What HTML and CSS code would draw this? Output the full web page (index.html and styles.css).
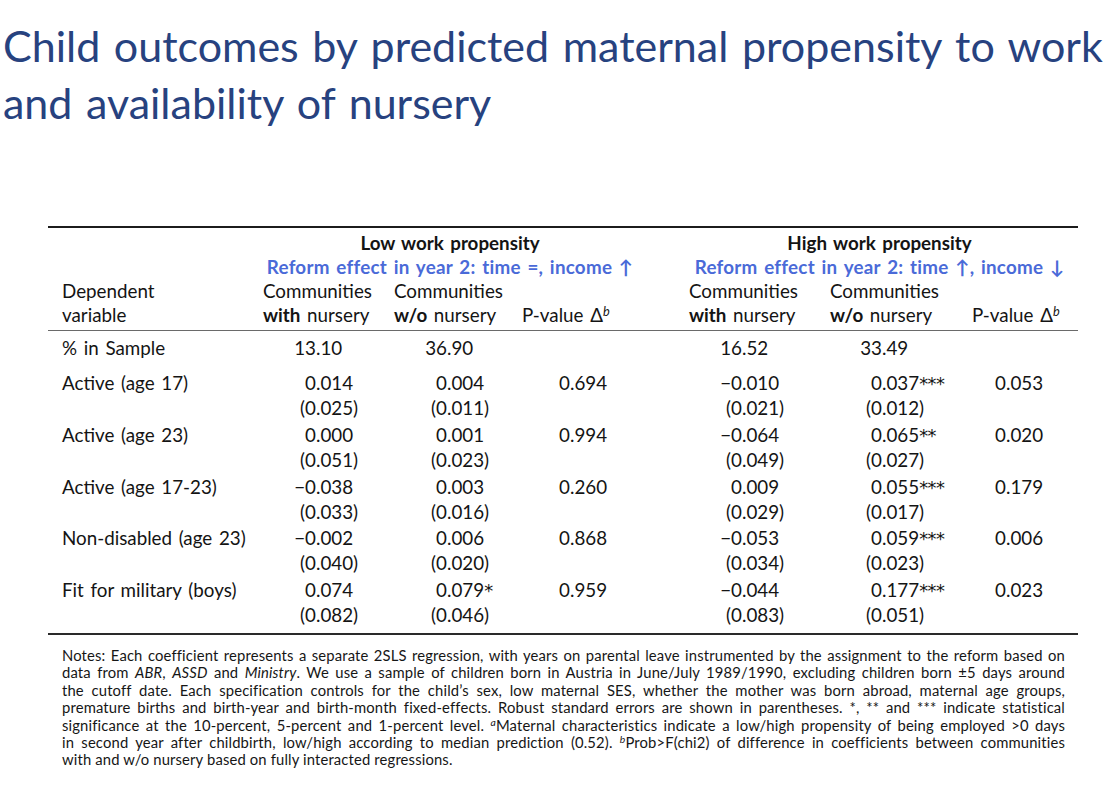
FILE: index.html
```html
<!DOCTYPE html>
<html lang="en">
<head>
<meta charset="utf-8">
<title>Child outcomes</title>
<link rel="stylesheet" href="styles.css">
</head>
<body>
<div class="slide">
  <h1 class="title">Child outcomes by predicted maternal propensity to work<br>and availability of nursery</h1>

  <div class="tbl">
    <div class="row hd first">
      <div></div>
      <div class="grp b">Low work propensity</div>
      <div></div>
      <div class="grp2 b">High work propensity</div>
    </div>
    <div class="row hd">
      <div></div>
      <div class="grp blue">Reform effect in year 2: time =, income ↑</div>
      <div></div>
      <div class="grp2 blue">Reform effect in year 2: time ↑, income ↓</div>
    </div>
    <div class="row hd">
      <div class="lab">Dependent</div>
      <div class="h">Communities</div>
      <div class="h">Communities</div>
      <div></div>
      <div></div>
      <div class="h">Communities</div>
      <div class="h">Communities</div>
      <div></div>
    </div>
    <div class="row hd last">
      <div class="lab">variable</div>
      <div class="h"><b>with</b> nursery</div>
      <div class="h"><b>w/o</b> nursery</div>
      <div class="h">P-value Δ<sup>b</sup></div>
      <div></div>
      <div class="h"><b>with</b> nursery</div>
      <div class="h"><b>w/o</b> nursery</div>
      <div class="h">P-value Δ<sup>b</sup></div>
    </div>

    <div class="body">
      <div class="row data share">
        <div class="lab">% in Sample</div>
        <div class="v d61"><span class="i">13</span>.10</div>
        <div class="v d61"><span class="i">36</span>.90</div>
        <div></div>
        <div></div>
        <div class="v d61"><span class="i">16</span>.52</div>
        <div class="v d60"><span class="i">33</span>.49</div>
        <div></div>
      </div>

      <div class="row data">
        <div class="lab">Active (age 17)</div>
        <div class="v d61"><span class="i">0</span>.014<br><span class="i">(0</span>.025)</div>
        <div class="v d61"><span class="i">0</span>.004<br><span class="i">(0</span>.011)</div>
        <div class="v d56"><span class="i">0</span>.694</div>
        <div></div>
        <div class="v d61"><span class="i">−0</span>.010<br><span class="i">(0</span>.021)</div>
        <div class="v d60"><span class="i">0</span>.037<span class="st">***</span><br><span class="i">(0</span>.012)</div>
        <div class="v d42"><span class="i">0</span>.053</div>
      </div>

      <div class="row data">
        <div class="lab">Active (age 23)</div>
        <div class="v d61"><span class="i">0</span>.000<br><span class="i">(0</span>.051)</div>
        <div class="v d61"><span class="i">0</span>.001<br><span class="i">(0</span>.023)</div>
        <div class="v d56"><span class="i">0</span>.994</div>
        <div></div>
        <div class="v d61"><span class="i">−0</span>.064<br><span class="i">(0</span>.049)</div>
        <div class="v d60"><span class="i">0</span>.065<span class="st">**</span><br><span class="i">(0</span>.027)</div>
        <div class="v d42"><span class="i">0</span>.020</div>
      </div>

      <div class="row data">
        <div class="lab">Active (age 17-23)</div>
        <div class="v d61"><span class="i">−0</span>.038<br><span class="i">(0</span>.033)</div>
        <div class="v d61"><span class="i">0</span>.003<br><span class="i">(0</span>.016)</div>
        <div class="v d56"><span class="i">0</span>.260</div>
        <div></div>
        <div class="v d61"><span class="i">0</span>.009<br><span class="i">(0</span>.029)</div>
        <div class="v d60"><span class="i">0</span>.055<span class="st">***</span><br><span class="i">(0</span>.017)</div>
        <div class="v d42"><span class="i">0</span>.179</div>
      </div>

      <div class="row data">
        <div class="lab">Non-disabled (age 23)</div>
        <div class="v d61"><span class="i">−0</span>.002<br><span class="i">(0</span>.040)</div>
        <div class="v d61"><span class="i">0</span>.006<br><span class="i">(0</span>.020)</div>
        <div class="v d56"><span class="i">0</span>.868</div>
        <div></div>
        <div class="v d61"><span class="i">−0</span>.053<br><span class="i">(0</span>.034)</div>
        <div class="v d60"><span class="i">0</span>.059<span class="st">***</span><br><span class="i">(0</span>.023)</div>
        <div class="v d42"><span class="i">0</span>.006</div>
      </div>

      <div class="row data lastrow">
        <div class="lab">Fit for military (boys)</div>
        <div class="v d61"><span class="i">0</span>.074<br><span class="i">(0</span>.082)</div>
        <div class="v d61"><span class="i">0</span>.079<span class="st">*</span><br><span class="i">(0</span>.046)</div>
        <div class="v d56"><span class="i">0</span>.959</div>
        <div></div>
        <div class="v d61"><span class="i">−0</span>.044<br><span class="i">(0</span>.083)</div>
        <div class="v d60"><span class="i">0</span>.177<span class="st">***</span><br><span class="i">(0</span>.051)</div>
        <div class="v d42"><span class="i">0</span>.023</div>
      </div>
    </div>
  </div>

  <div class="notes">
    <span class="ln">Notes: Each coefficient represents a separate 2SLS regression, with years on parental leave instrumented by the assignment to the reform based on</span>
    <span class="ln">data from <i>ABR</i>, <i>ASSD</i> and <i>Ministry</i>. We use a sample of children born in Austria in June/July 1989/1990, excluding children born ±5 days around</span>
    <span class="ln">the cutoff date. Each specification controls for the child’s sex, low maternal SES, whether the mother was born abroad, maternal age groups,</span>
    <span class="ln">premature births and birth-year and birth-month fixed-effects. Robust standard errors are shown in parentheses. *, ** and *** indicate statistical</span>
    <span class="ln">significance at the 10-percent, 5-percent and 1-percent level. <sup>a</sup>Maternal characteristics indicate a low/high propensity of being employed &gt;0 days</span>
    <span class="ln">in second year after childbirth, low/high according to median prediction (0.52). <sup>b</sup>Prob&gt;F(chi2) of difference in coefficients between communities</span>
    <span class="ln end">with and w/o nursery based on fully interacted regressions.</span>
  </div>
</div>
</body>
</html>
```

FILE: styles.css
```css
html, body {
  margin: 0;
  padding: 0;
  background: #ffffff;
}

body {
  font-family: "Lato", "Liberation Sans", sans-serif;
  color: #141414;
}

.slide {
  width: 1114px;
  height: 796px;
  overflow: hidden;
}

.title {
  margin: 0;
  padding: 17px 0 0 3px;
  font-size: 43px;
  line-height: 57px;
  font-weight: 400;
  color: #27427f;
  word-spacing: 0.06em;
  white-space: nowrap;
}

.tbl {
  margin: 95px 0 0 48px;
  width: 1030px;
  border-top: 2px solid #1c1c1c;
  border-bottom: 2px solid #2a2a2a;
  font-size: 18.8px;
  word-spacing: 0.1em;
}

.row {
  display: grid;
  grid-template-columns: 207px 131px 128px 131px 36px 141px 142px 114px;
}

.hd {
  line-height: 24px;
}

.hd.first {
  padding-top: 3px;
}

.hd.last {
  padding-bottom: 3px;
}

.grp {
  grid-column: 2 / 5;
  text-align: center;
  white-space: nowrap;
}

.grp2 {
  grid-column: 6 / 9;
  text-align: center;
  white-space: nowrap;
}

.b {
  font-weight: 700;
}

.blue {
  color: #4a6ad8;
  font-weight: 700;
  letter-spacing: 0.25px;
}

.lab {
  padding-left: 14px;
  white-space: nowrap;
}

.h {
  padding-left: 8px;
  white-space: nowrap;
}

sup {
  font-size: 0.68em;
  font-style: italic;
  line-height: 0;
  vertical-align: 0.45em;
}

.body {
  border-top: 1.5px solid #6a6a6a;
  padding: 4px 0 6px;
}

.data {
  line-height: 25px;
  height: 50px;
  padding-bottom: 1.75px;
}

.data.share {
  height: 25px;
  padding-bottom: 10px;
}

.data.lastrow {
  padding-bottom: 0;
}

.v {
  white-space: nowrap;
}

.i {
  display: inline-block;
  text-align: right;
}

.st {
  font-family: "DejaVu Sans", sans-serif;
  font-size: 0.95em;
  letter-spacing: -0.5px;
  line-height: 0;
}

.d61 .i { width: 61px; }
.d60 .i { width: 60px; }
.d56 .i { width: 56px; }
.d42 .i { width: 42px; }

.notes {
  margin: 12px 49px 0 62px;
  font-size: 14.8px;
  line-height: 17.4px;
  letter-spacing: 0.15px;
  color: #161616;
}

.ln {
  display: block;
  text-align: justify;
  text-align-last: justify;
  white-space: nowrap;
}

.ln.end {
  text-align-last: left;
}

.notes sup {
  font-size: 0.7em;
  vertical-align: 0.5em;
}
```
